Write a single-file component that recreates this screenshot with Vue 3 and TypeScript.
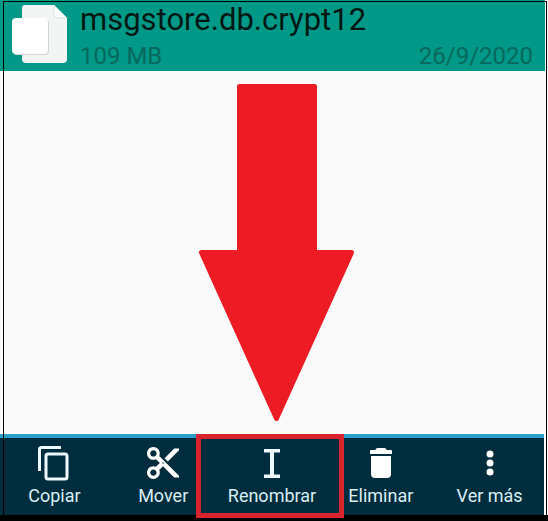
<script setup lang="ts">
interface FileEntry {
  name: string
  size: string
  date: string
}

interface Action {
  id: 'copy' | 'move' | 'rename' | 'delete' | 'more'
  label: string
}

const file: FileEntry = {
  name: 'msgstore.db.crypt12',
  size: '109 MB',
  date: '26/9/2020',
}

const actions: Action[] = [
  { id: 'copy', label: 'Copiar' },
  { id: 'move', label: 'Mover' },
  { id: 'rename', label: 'Renombrar' },
  { id: 'delete', label: 'Eliminar' },
  { id: 'more', label: 'Ver más' },
]
</script>

<template>
  <div class="screen">
    <header class="file">
      <svg class="file-icon" viewBox="0 0 56 60" aria-hidden="true">
        <path d="M13 1H42L55 14V55Q55 59 51 59H14Q10 59 10 55V4Q10 1 13 1Z" fill="#f3f4f4" />
        <path d="M42 1L55 14H45Q42 14 42 11Z" fill="#fff" />
        <path d="M42 1V11Q42 14 45 14H55" fill="none" stroke="#dcdede" stroke-width="1" />
        <rect x="1" y="15" width="36" height="36" rx="4" fill="#d5d7d7" />
        <rect x="0" y="14" width="36" height="36" rx="4" fill="#fff" />
      </svg>
      <div class="file-text">
        <h1 class="file-name">{{ file.name }}</h1>
        <div class="file-meta">
          <span>{{ file.size }}</span>
          <span>{{ file.date }}</span>
        </div>
      </div>
    </header>

    <main class="content">
      <svg class="arrow" viewBox="0 0 156 338" aria-hidden="true">
        <path
          d="M41.500 3.500H116.500V169.500H153.500L78.500 335.500L3.500 169.500H41.500Z"
          fill="#ed1c24"
          stroke="#ed1c24"
          stroke-width="5"
          stroke-linejoin="round"
        />
      </svg>
    </main>

    <nav class="toolbar">
      <button
        v-for="action in actions"
        :key="action.id"
        type="button"
        class="action"
        :class="{ marked: action.id === 'rename' }"
      >
        <svg class="icon" viewBox="0 0 36 36" aria-hidden="true">
          <g v-if="action.id === 'copy'" fill="none" stroke="#eefaff" stroke-width="3">
            <path d="M3.500 26V4.500Q3.500 2.500 5.500 2.500H25" />
            <rect x="10" y="9" width="21" height="25" rx="2" />
          </g>
          <path
            v-else-if="action.id === 'move'"
            transform="translate(-1.2 -1.2) scale(1.6)"
            d="M9.640 7.640c.23-.5.36-1.05.36-1.640 0-2.210-1.790-4-4-4S2 3.790 2 6s1.790 4 4 4c.59 0 1.140-.13 1.640-.36L10 12l-2.360 2.360C7.140 14.130 6.590 14 6 14c-2.210 0-4 1.790-4 4s1.790 4 4 4 4-1.790 4-4c0-.59-.13-1.140-.36-1.640L12 14l7 7h3v-1L9.640 7.640zM6 8c-1.100 0-2-.89-2-2s.9-2 2-2 2 .89 2 2-.9 2-2 2zm0 12c-1.100 0-2-.89-2-2s.9-2 2-2 2 .89 2 2-.9 2-2 2zm6-7.500c-.28 0-.5-.22-.5-.5s.22-.5.5-.5.5.22.5.5-.22.5-.5.5zM19 3l-6 6 2 2 7-7V3z"
            fill="#fff"
          />
          <path
            v-else-if="action.id === 'rename'"
            d="M10 4H26V7.500H20V29.500H26V33H10V29.500H16V7.500H10Z"
            fill="#eefaff"
          />
          <g v-else-if="action.id === 'delete'" fill="#fff">
            <path d="M7 6Q7 5 8 5H12L14 3H22L24 5H28Q29 5 29 6V9H7Z" />
            <path d="M8 11H28V29Q28 33 24 33H12Q8 33 8 29Z" />
          </g>
          <g v-else fill="#fff">
            <circle cx="18" cy="9" r="3.500" />
            <circle cx="18" cy="18" r="3.500" />
            <circle cx="18" cy="27" r="3.500" />
          </g>
        </svg>
        <span>{{ action.label }}</span>
      </button>
    </nav>
    <div class="frame" aria-hidden="true"></div>
  </div>
</template>

<style>
body {
  background: #fafafa;
}
</style>

<style scoped>
.screen {
  position: relative;
  box-sizing: border-box;
  min-height: 100vh;
  display: flex;
  flex-direction: column;
  border-bottom: 6px solid #000;
  background: #fafafa;
  font-family: Roboto, "Liberation Sans", sans-serif;
}

.file {
  display: flex;
  gap: 12px;
  margin-right: 3px;
  padding: 4px 12px 0 12px;
  height: 67px;
  background: #009887;
}

.file-icon {
  flex: none;
  width: 56px;
  height: 60px;
}

.file-text {
  flex: 1;
  min-width: 0;
}

.file-name {
  margin: 0;
  font-size: 31px;
  font-weight: 400;
  line-height: 32px;
  color: #001814;
}

.file-meta {
  display: flex;
  justify-content: space-between;
  padding-top: 4px;
  font-size: 24px;
  line-height: 32px;
  color: #08685d;
}

.content {
  flex: 1;
  display: flex;
  justify-content: center;
  padding: 12px 0 12px 4px;
}

.arrow {
  width: 156px;
  height: 338px;
}

.toolbar {
  display: grid;
  grid-template-columns: repeat(5, 1fr);
  margin-right: 4px;
  border-top: 4px solid #2c9fca;
  background: #002d3d;
}

.action {
  position: relative;
  display: flex;
  flex-direction: column;
  align-items: center;
  gap: 3px;
  padding: 7px 0;
  border: 0;
  background: none;
  font: inherit;
  font-size: 18px;
  line-height: 24px;
  color: #d9edf4;
  white-space: nowrap;
  cursor: pointer;
}

.icon {
  width: 36px;
  height: 36px;
}

.marked::after {
  content: "";
  position: absolute;
  z-index: 2;
  inset: -4px -18px -3px -22px;
  border: 5px solid #d9232e;
}

.frame {
  position: absolute;
  inset: 1px 1px -6px 3px;
  border: 1px solid #000;
  pointer-events: none;
}
</style>
